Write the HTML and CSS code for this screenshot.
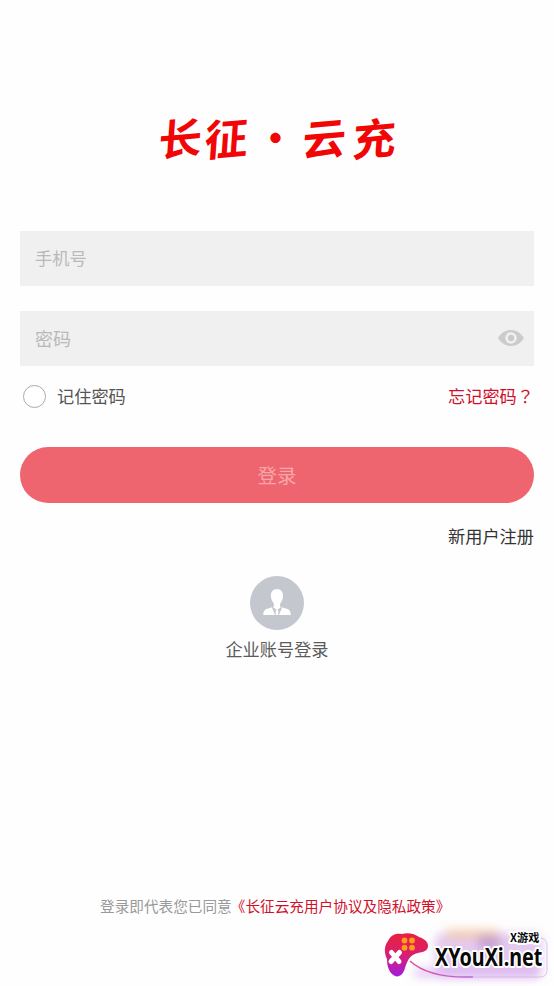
FILE: index.html
```html
<!DOCTYPE html>
<html lang="zh-CN">
<head>
<meta charset="utf-8">
<title>登录</title>
<link rel="stylesheet" href="styles.css">
</head>
<body>
<main class="page">
  <h1 class="brand"><span>长</span><span>征</span><span class="dot">·</span><span>云</span><span>充</span></h1>
  <form class="form">
    <div class="field phone"><span>手机号</span></div>
    <div class="field password"><span>密码</span>
      <svg class="eye" viewBox="0 0 26 16" width="26" height="16"><path fill="#cbcbcb" fill-rule="evenodd" d="M0 8C3 3 7.500 0 13 0s10 3 13 8c-3 5-7.500 8-13 8S3 13 0 8ZM13 2.200a5.800 5.800 0 1 0 0 11.600a5.800 5.800 0 1 0 0-11.600Z"/><circle cx="13" cy="8" r="3.200" fill="#cbcbcb"/></svg>
    </div>
    <div class="options">
      <label class="remember"><i class="radio"></i>记住密码</label>
      <a class="forgot">忘记密码<span class="mark" lang="zh-TW">？</span></a>
    </div>
    <div class="login">登录</div>
    <a class="register">新用户注册</a>
  </form>
  <section class="company">
    <svg width="54" height="54" viewBox="0 0 54 54"><circle cx="27" cy="27" r="27" fill="#c5c7ce"/><g fill="#fff"><path d="M27 13c4 0 6.300 3 6.100 7.200c-.2 3.200-1.500 5.300-2.600 6.800c-.7 1-.5 3 .2 4.400L27 34l-3.700-2.600c.7-1.400.9-3.400.2-4.400c-1.100-1.500-2.400-3.600-2.600-6.800C20.700 16 23 13 27 13Z"/><path d="M22 31.200L25.500 39H13.200c0-3.500 1.400-5.500 4-6.200ZM32 31.200L28.500 39h12.300c0-3.500-1.400-5.500-4-6.200Z"/><path d="M26 34h2l1 5h-4Z"/></g><path d="M22.800 32l2.700 7M31.200 32l-2.700 7" stroke="#c5c7ce" stroke-width="1"/></svg>
    <span>企业账号登录</span>
  </section>
  <footer class="terms">登录即代表您已同意<a>《长征云充用户协议及隐私政策》</a></footer>
</main>
<div class="watermark">
  <svg width="184" height="71" viewBox="0 0 184 71">
    <defs>
      <linearGradient id="pad" x1="0" y1="0" x2="0" y2="1"><stop offset="0" stop-color="#e9203c"/><stop offset=".5" stop-color="#d91e70"/><stop offset="1" stop-color="#a01de0"/></linearGradient>
      <linearGradient id="trail"><stop offset="0" stop-color="#e0508f"/><stop offset="1" stop-color="#bd62e6"/></linearGradient>
      <filter id="haze" x="-30%" y="-50%" width="160%" height="200%"><feGaussianBlur stdDeviation="5"/></filter>
    </defs>
    <g filter="url(#haze)">
      <rect x="65" y="18" width="107" height="45" rx="8" fill="#d9b3e8" opacity=".7"/>
      <rect x="76" y="14" width="52" height="10" fill="#f3c79c" opacity=".7"/>
      <rect x="45" y="54" width="125" height="8" fill="#d3a5ef" opacity=".65"/>
      <rect x="108" y="20" width="22" height="15" fill="#b58bc9" opacity=".6"/>
    </g>
    <path d="M40 46C52 57 74 63 103 62" fill="none" stroke="url(#trail)" stroke-width="1.500"/>
    <path d="M171 23q6 1 6 8v24q0 7-7 7H103" fill="none" stroke="#cba4dc" stroke-width="1" opacity=".6"/>
    <path d="M18 26C21 19 28 18 32 19C38 17 45 19 49 22C55 24 58 27 58 31C58 36 53 37 48 38C40 40 38 44 35 53C33 61 27 64 22 59C18 55 17 49 17 44C14 38 14 31 18 26Z" fill="url(#pad)" stroke="#fff" stroke-width="3" paint-order="stroke"/>
    <path d="M21.500 37.500l7.500 9M29.500 37.500l-8.500 9" stroke="#fff" stroke-width="5" stroke-linecap="round"/>
    <g fill="#ff9e18"><circle cx="34.500" cy="25.500" r="2.900"/><circle cx="42" cy="25.500" r="2.900"/><circle cx="34.500" cy="32.700" r="2.900"/><circle cx="42" cy="32.700" r="2.900"/></g>
    <text class="site" transform="translate(65 51) scale(.805 1)">XYouXi.net</text>
    <text class="site-name" x="140" y="27">X游戏</text>
  </svg>
</div>
</body>
</html>
```
FILE: styles.css
```css
* { box-sizing: border-box; }
body {
  margin: 0;
  background: #fefefe;
  font-family: "Noto Sans CJK SC", sans-serif;
  font-size: 17.2px;
  line-height: 24px;
  color: #333;
}
.page {
  height: 986px;
  padding: 106px 20px 0;
  display: flex;
  flex-direction: column;
}
.brand {
  margin: 0 0 65px;
  padding-left: 5px;
  height: 60px;
  display: grid;
  grid-template-columns: 46px 46px 52px 46px 54px;
  justify-content: center;
  justify-items: center;
  font-size: 43px;
  line-height: 60px;
  font-weight: 700;
  color: #f20505;
}
.brand span { transform: skewX(-9deg) rotate(-5deg); }
.brand .dot { transform: none; font-size: 40px; }
.form { display: flex; flex-direction: column; }
.field {
  height: 55px;
  margin-bottom: 25px;
  padding: 0 10px 1px 15px;
  display: flex;
  align-items: center;
  justify-content: space-between;
  background: #f0f0f0;
  color: #b9b9b9;
}
.password { margin-bottom: 18px; font-size: 18px; }
.eye { display: block; }
.options {
  height: 24px;
  display: flex;
  align-items: center;
  justify-content: space-between;
}
.remember {
  display: flex;
  align-items: center;
  padding-left: 3px;
  color: #555;
}
.radio {
  width: 23px;
  height: 23px;
  margin-right: 11px;
  border: 1px solid #aaa;
  border-radius: 50%;
  background: #fff;
}
.forgot { color: #d0102b; }
.mark { font-family: "Noto Sans CJK TC", sans-serif; }
.login {
  height: 56px;
  margin: 39px 0 21px;
  border-radius: 28px;
  background: #ee656f;
  color: #f8a7a9;
  font-size: 19.5px;
  line-height: 56px;
  text-align: center;
}
.register { align-self: flex-end; }
.company {
  margin-top: 28px;
  display: flex;
  flex-direction: column;
  align-items: center;
  gap: 7px;
  color: #5b5b5b;
}
.terms {
  margin: 233px 0 0 80px;
  font-size: 14.65px;
  color: #999;
  white-space: nowrap;
}
.terms a { color: #d0102b; margin-left: -1px; }
.watermark {
  position: absolute;
  left: 370px;
  top: 915px;
  width: 184px;
  height: 71px;
}
.watermark svg { display: block; }
.site, .site-name {
  font-weight: 700;
  fill: #080808;
  stroke: #fff;
  stroke-width: 4px;
  stroke-linejoin: round;
  paint-order: stroke;
}
.site { font-family: "Noto Sans", sans-serif; font-size: 24.5px; }
.site-name { font-family: "Noto Sans CJK SC", sans-serif; font-size: 11.2px; }
```
